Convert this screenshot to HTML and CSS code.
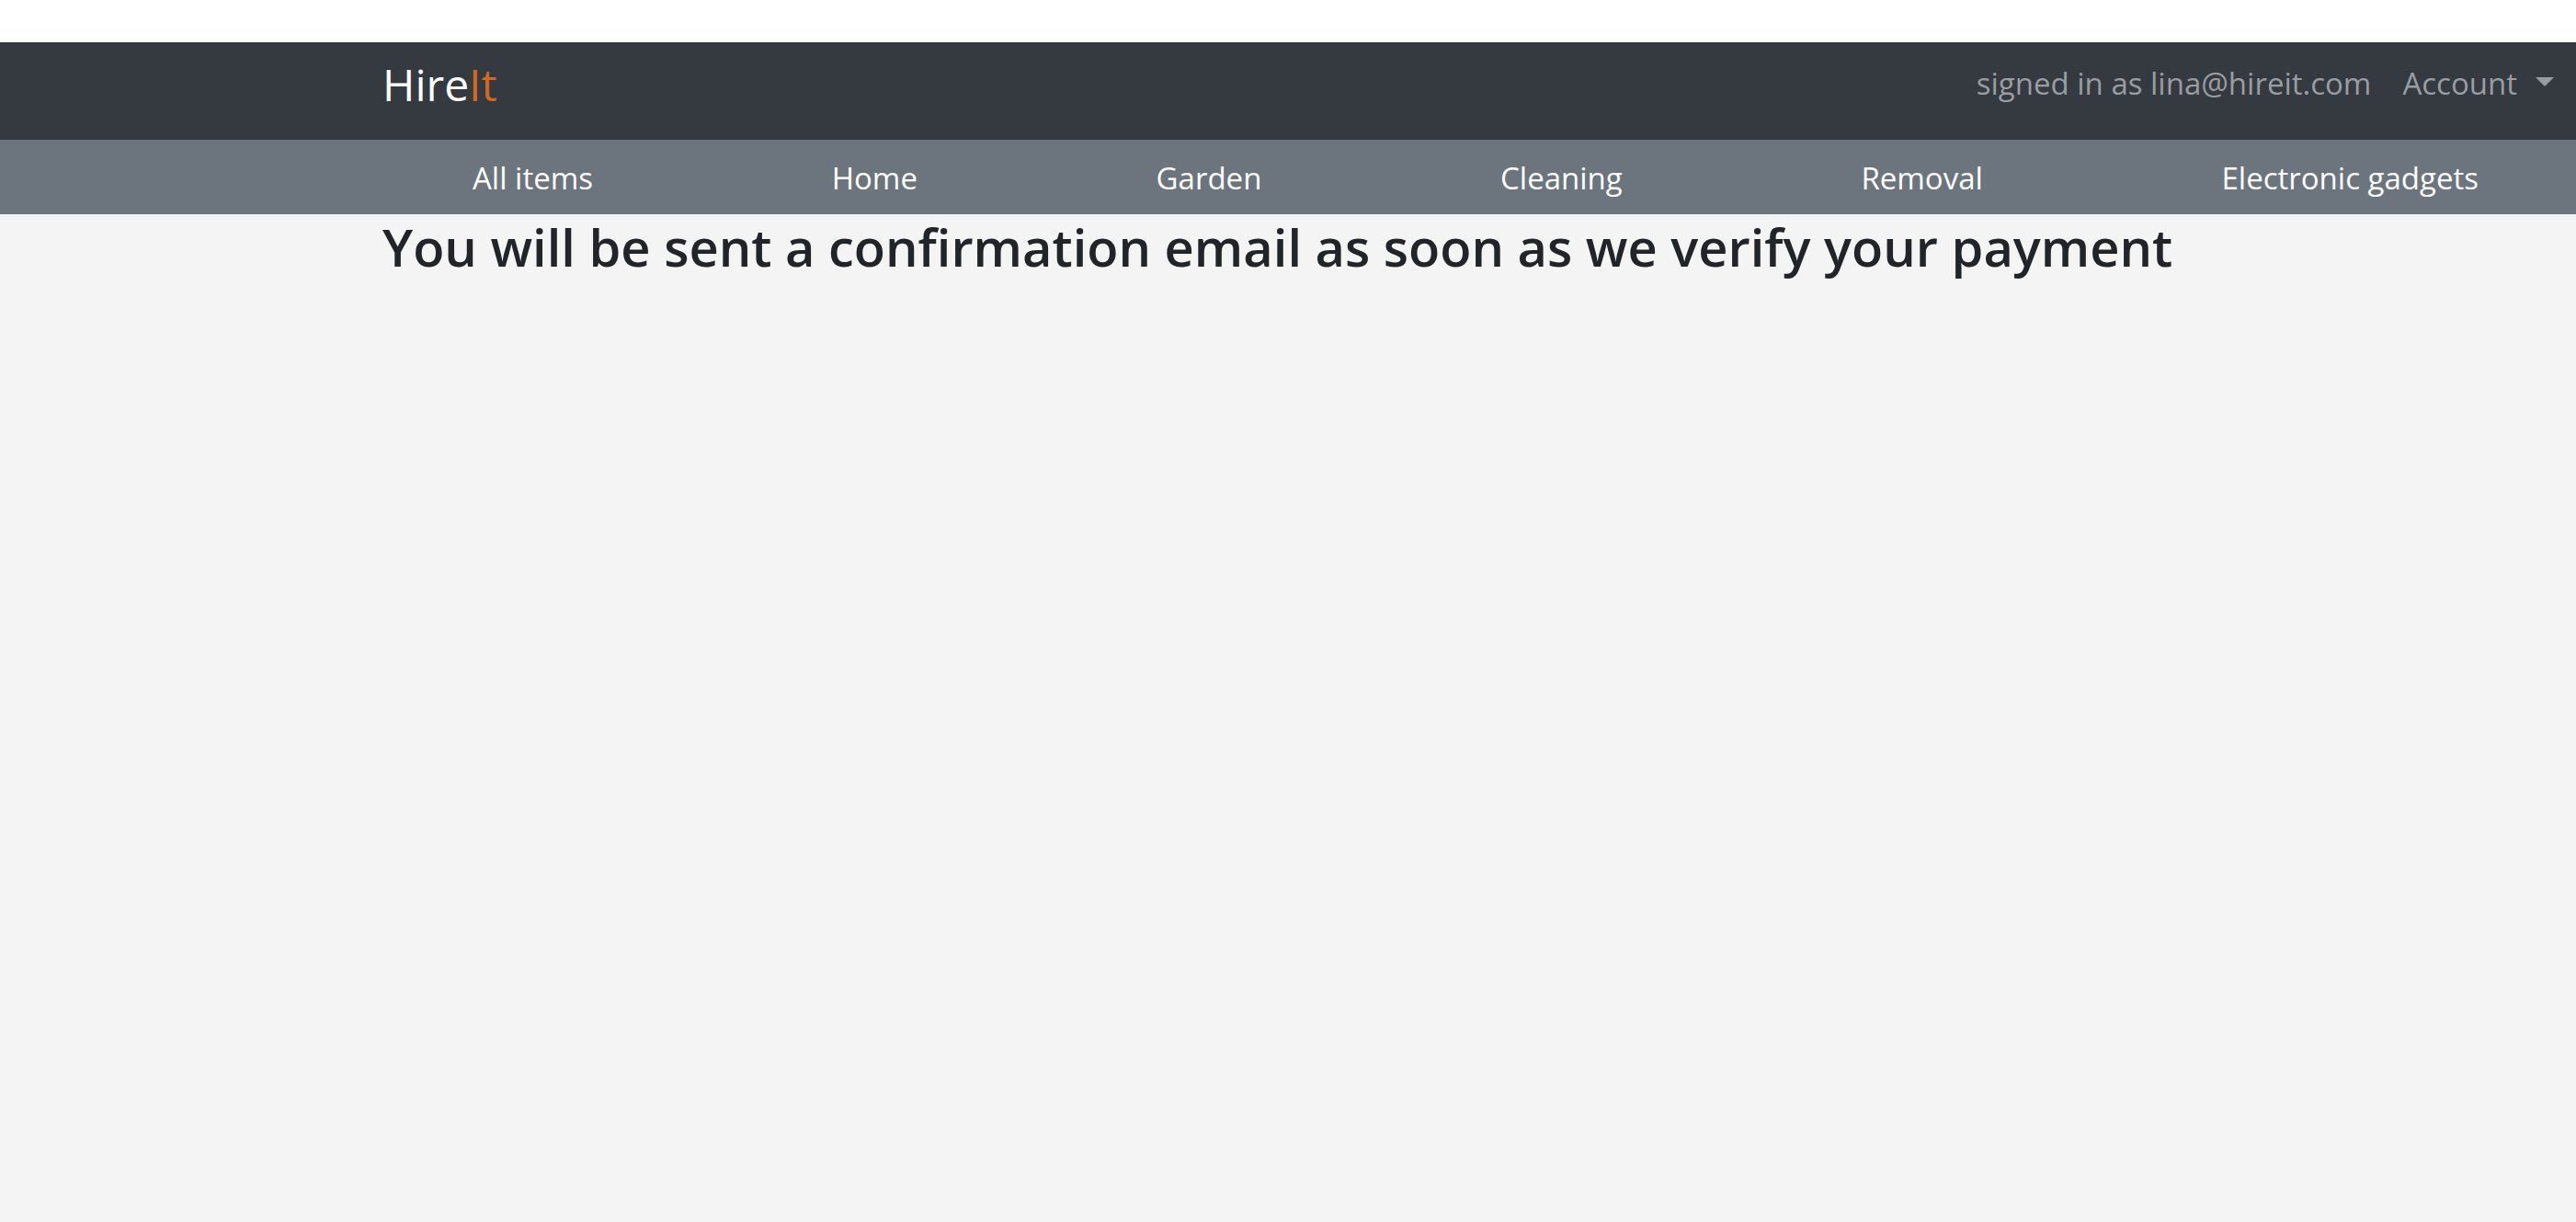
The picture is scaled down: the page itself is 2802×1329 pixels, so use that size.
FILE: index.html
```html
<!DOCTYPE html>
<html lang="en">
<head>
<meta charset="utf-8">
<title>HireIt</title>
<link rel="stylesheet" href="styles.css">
</head>
<body>
<header>
<nav class="navbar" aria-label="Account">
<a class="brand" href="#">Hire<span class="brand-accent">It</span></a>
<div class="account">
<span>signed in as lina@hireit.com</span>
<button class="account-toggle" type="button">Account<span class="caret"></span></button>
</div>
</nav>
<nav class="categories" aria-label="Categories">
<a href="#">All items</a>
<a href="#">Home</a>
<a href="#">Garden</a>
<a href="#">Cleaning</a>
<a href="#">Removal</a>
<a href="#">Electronic gadgets</a>
</nav>
</header>
<main class="content">
<h1 class="message">You will be sent a confirmation email as soon as we verify your payment</h1>
</main>
</body>
</html>
```
FILE: styles.css
```css
* { box-sizing: border-box; }
html { background: #f4f4f4; }
body {
  margin: 0;
  border-top: 46px solid #fff;
  font-family: "Open Sans", "Noto Sans", sans-serif;
  font-size: 33px;
  line-height: 48px;
  color: #212529;
}
a { color: inherit; text-decoration: none; }
.navbar {
  display: flex;
  justify-content: space-between;
  align-items: flex-start;
  padding: 10px 24px 24px 416px;
  background: #343a40;
}
.brand { font-size: 48px; line-height: 72px; color: #fff; }
.brand-accent { color: #d2691e; }
.account {
  display: flex;
  gap: 34px;
  padding-top: 11px;
  color: #9a9da0;
}
.account-toggle {
  display: flex;
  gap: 20px;
  padding: 0;
  border: 0;
  background: none;
  color: inherit;
  font: inherit;
}
.caret {
  margin-top: 17px;
  border: 10px solid transparent;
  border-top-color: currentColor;
  border-bottom: 0;
}
.categories {
  display: flex;
  justify-content: space-between;
  padding: 18px 106px 15px 514px;
  background: #6c757d;
  color: #fff;
}
.content { padding: 0 24px 0 416px; }
.message {
  margin: 0;
  font-size: 56px;
  line-height: 70px;
  font-weight: 600;
}
```
